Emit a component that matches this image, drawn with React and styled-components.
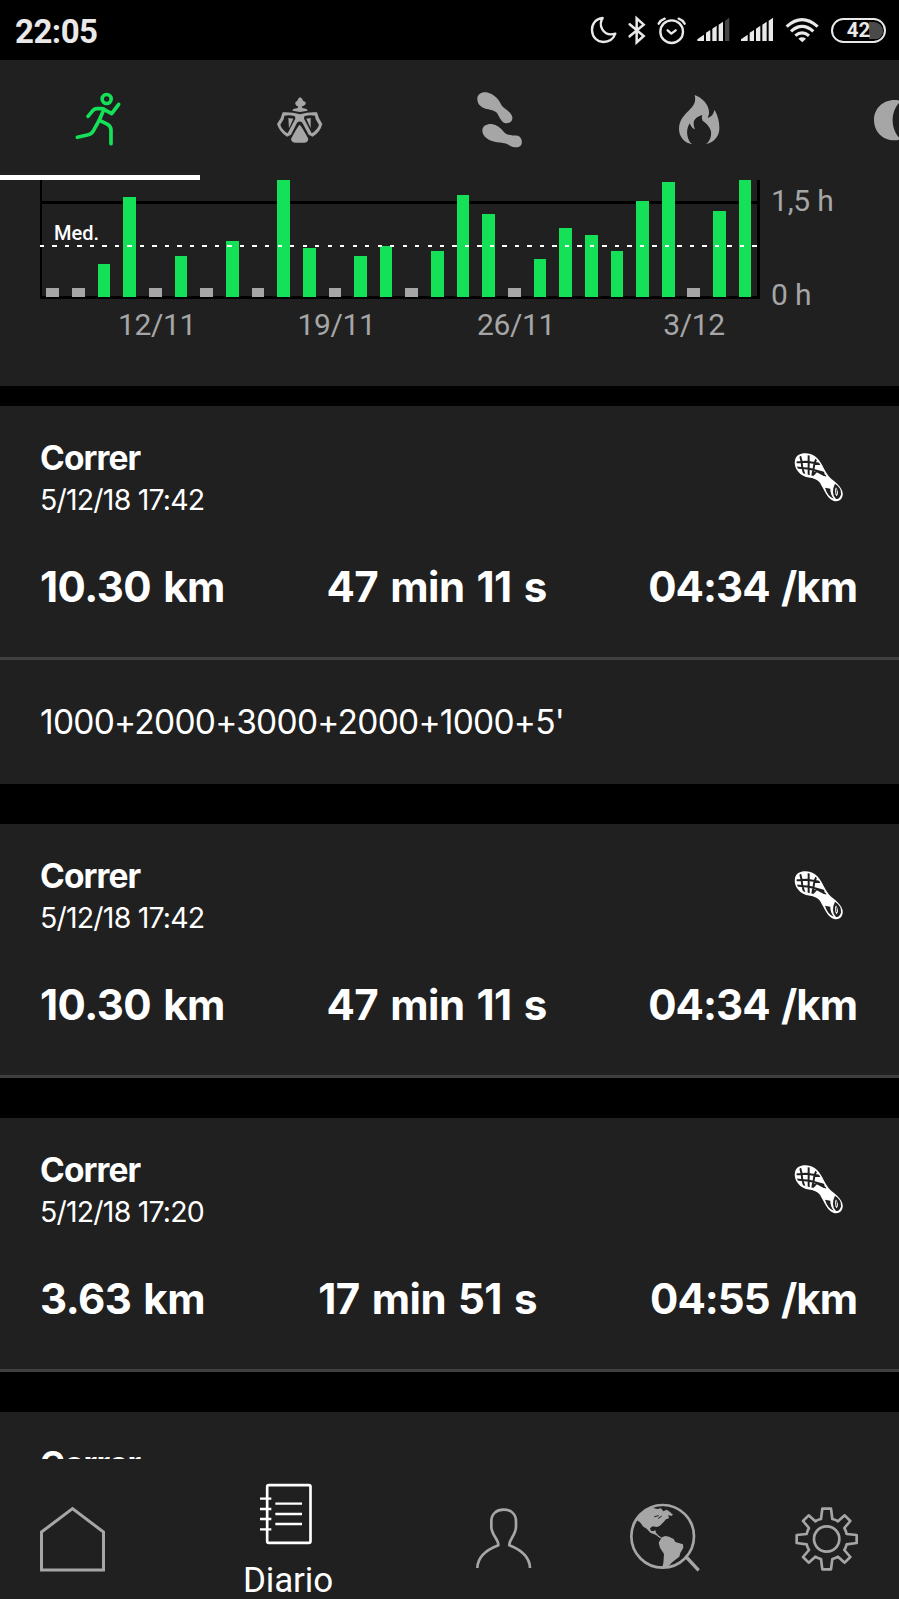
import React from 'react';
import styled, { createGlobalStyle } from 'styled-components';

const GREEN = '#14e058';
const PANEL = '#202020';
const MUTED = '#a6a6a6';

const GlobalStyle = createGlobalStyle`
  * { box-sizing: border-box; }
  html, body { margin: 0; background: #000; }
  body { width: 899px; height: 1599px; overflow: hidden; }
  svg { display: block; flex: none; }
`;

const Screen = styled.div`
  width: 899px;
  height: 1599px;
  display: flex;
  flex-direction: column;
  overflow: hidden;
  background: #000;
  color: #fff;
  font-family: Roboto, "Liberation Sans", sans-serif;
`;

/* Status bar */
const StatusBar = styled.header`
  flex: none;
  height: 60px;
  display: flex;
  align-items: center;
  justify-content: space-between;
  padding: 0 13px 0 15px;
  color: #e9e9e9;
`;
const Clock = styled.div`
  font-size: 33px;
  font-weight: 700;
  line-height: 60px;
  padding-top: 3px;
  letter-spacing: -0.5px;
`;
const StatusIcons = styled.div`
  display: flex;
  align-items: center;
`;
const Battery = styled.div`
  width: 55px;
  height: 25px;
  margin-left: 6px;
  border: 2.6px solid #e9e9e9;
  border-radius: 13px;
  display: flex;
  align-items: center;
  justify-content: center;
  font-size: 20.5px;
  font-weight: 700;
  line-height: 20px;
  background: linear-gradient(to right, #000 34px, #4a4a4a 34px) content-box;
  padding: 1.5px;
`;

/* Sport tabs */
const Tabs = styled.nav`
  flex: none;
  height: 120px;
  display: flex;
  overflow: hidden;
  background: ${PANEL};
`;
const Tab = styled.div`
  flex: 0 0 200px;
  display: flex;
  align-items: center;
  justify-content: center;
  color: ${(p) => (p.$active ? GREEN : MUTED)};
  box-shadow: ${(p) => (p.$active ? 'inset 0 -5px 0 #fff' : 'none')};
`;

/* Chart */
const ChartPanel = styled.section`
  flex: none;
  height: 206px;
  margin-bottom: 20px;
  padding-left: 40px;
  background: ${PANEL};
  color: ${MUTED};
  font-size: 30px;
  line-height: 36px;
`;
const ChartRow = styled.div`
  display: flex;
`;
const Plot = styled.div`
  position: relative;
  width: 720px;
  height: 119px;
  border: solid #000;
  border-width: 0 3px 3px 2px;
`;
const GridLine = styled.div`
  position: absolute;
  left: 0;
  right: 0;
  top: 21px;
  height: 3px;
  background: #000;
`;
const Bars = styled.div`
  position: relative;
  display: flex;
  align-items: flex-end;
  justify-content: space-around;
  width: 718px;
  height: 117px;
  margin-left: -2px;
`;
const Bar = styled.div`
  width: 12.7px;
  background: ${(p) => (p.$rest ? MUTED : GREEN)};
`;
const AverageLine = styled.div`
  position: absolute;
  left: -2px;
  right: 0;
  top: 65px;
  height: 2px;
  background: repeating-linear-gradient(to right, #fff 0 4.2px, transparent 4.2px 12.5px);
`;
const AverageLabel = styled.div`
  position: absolute;
  left: 12px;
  top: 41px;
  color: #fff;
  font-size: 20px;
  font-weight: 500;
  line-height: 24px;
`;
const HourScale = styled.div`
  display: flex;
  flex-direction: column;
  justify-content: space-between;
  height: 134px;
  padding: 3px 0 1px 11px;
  letter-spacing: -0.2px;
`;
const Dates = styled.div`
  display: grid;
  grid-template-columns: 52px 179.5px 179.5px 178px 179.5px;
  width: 720px;
  overflow: visible;
  margin-top: -7px;
`;
const DateLabel = styled.span`
  width: 130px;
  text-align: center;
  letter-spacing: -0.4px;
  &:first-child { grid-column: 2; }
`;

/* Activity feed */
const Feed = styled.main`
  flex: 1;
  min-height: 0;
  overflow: hidden;
  display: flex;
  flex-direction: column;
  gap: 40px;
  font-family: Inter, "Liberation Sans", sans-serif;
`;
const Card = styled.article`
  flex: none;
  background: ${PANEL};
`;
const Summary = styled.div`
  height: 254px;
  padding: 32px 40px 0;
  border-bottom: 3px solid #3f3f3f;
`;
const CardHead = styled.div`
  display: flex;
  justify-content: space-between;
  height: 119px;
  padding-right: 10px;
  & > svg { margin-top: 9px; }
`;
const Title = styled.h2`
  margin: 0;
  font-size: 33.5px;
  line-height: 40px;
  font-weight: 700;
  letter-spacing: -0.9px;
`;
const When = styled.div`
  font-size: 28.5px;
  line-height: 36px;
  margin-top: 4px;
  letter-spacing: -0.8px;
`;
const Metrics = styled.div`
  display: flex;
  justify-content: space-between;
  font-size: 42px;
  line-height: 60px;
  font-weight: 700;
  letter-spacing: -0.5px;
  word-spacing: 2.5px;
  white-space: nowrap;
  padding-right: 2px;
  & > span:last-child { letter-spacing: -1px; }
`;
const Note = styled.p`
  margin: 0;
  height: 124px;
  padding: 0 40px;
  font-size: 33.5px;
  line-height: 124px;
  letter-spacing: -0.75px;
  white-space: nowrap;
`;

/* Bottom navigation */
const BottomNav = styled.nav`
  flex: none;
  height: 140px;
  display: grid;
  grid-template-columns: 144px 288px 144px 180px 142px;
  background: ${PANEL};
`;
const NavItem = styled.div`
  display: flex;
  flex-direction: column;
  align-items: center;
  padding-top: ${(p) => (p.$active ? 15 : 41)}px;
  color: ${(p) => (p.$active ? '#fff' : MUTED)};
  font-size: 35px;
  line-height: 40px;
  & > span { margin-top: 7px; letter-spacing: -0.1px; }
`;

function Glyph({ box, width, height, children }) {
  return (
    <svg viewBox={box} width={width} height={height} fill="none" stroke="currentColor" strokeLinecap="round" strokeLinejoin="round">
      {children}
    </svg>
  );
}

const MoonGlyph = () => (
  <Glyph box="50 0 105 180" width={35} height={60}>
    <path strokeWidth="7" d="M97 54C75 56 64 74 65 91C66 112 81 126 99 126C116 126 129 117 135 101C119 106 104 101 96 88C89 76 91 63 97 54Z" />
  </Glyph>
);
const BluetoothGlyph = () => (
  <Glyph box="155 0 90 180" width={30} height={60}>
    <path strokeWidth="7.500" strokeLinejoin="miter" d="M178 73L220 108L199 127V55L220 74L178 109" />
  </Glyph>
);
const AlarmGlyph = () => (
  <Glyph box="245 0 120 180" width={40} height={60}>
    <circle cx="304" cy="95" r="34" strokeWidth="7" />
    <path strokeWidth="7" d="M265 71Q271 60 283 56M343 71Q337 60 325 56M292 91L303 101L316 91" />
  </Glyph>
);
const SignalGlyph = ({ box, width, x, weak }) => (
  <Glyph box={box} width={width} height={60}>
    <g fill="currentColor" stroke="none">
      <path d={`M${x} 123V118L${x + 20} 104V123Z`} />
      <path d={`M${x + 26} 123V98L${x + 39} 90V123Z`} />
      <path d={`M${x + 45} 123V86L${x + 58} 77V123Z`} />
      <path d={`M${x + 64} 123V74L${x + 77} 65V123Z`} />
      <path opacity={weak ? 0.3 : 1} d={`M${x + 83} 123V62L${x + 96} 53V123Z`} />
    </g>
  </Glyph>
);
const WifiGlyph = () => (
  <Glyph box="630 0 135 180" width={45} height={60}>
    <g strokeWidth="9.500" strokeLinecap="butt">
      <path d="M650 80Q696 38 743 80M663 94Q696 64 730 94M676 107Q696 90 717 107" />
    </g>
    <path fill="currentColor" stroke="none" d="M685 116Q696 108 708 116L697 127Z" />
  </Glyph>
);

const RunnerGlyph = () => (
  <Glyph box="210 270 180 180" width={60} height={60}>
    <g strokeWidth="11">
      <circle cx="320" cy="297" r="13.500" />
      <path d="M264 349L279 331Q284 326 291 326H305Q311 326 317 331L335 341L356 313" />
      <path d="M311 330L298 360L282 389Q276 402 262 405L232 412" />
      <path d="M299 361L323 373Q333 379 333 391V431" />
    </g>
  </Glyph>
);
const MaskGlyph = () => (
  <Glyph box="810 270 180 180" width={60} height={60}>
    <g fill="currentColor" stroke="none">
      <path d="M900 291L907 297L909 302L917 307V313L909 319L905 319L907 324L920 327L923 332L900 336L877 332L880 327L893 324L895 319L891 319L886 313V307L892 302L894 297Z" />
      <path d="M848 337Q875 335 900 343Q925 335 951 337L957 355L967 372Q960 398 938 410L926 404L907 368Q899 361 891 368L873 404L861 410Q840 398 831 372L842 355Z" />
    </g>
    <g fill={PANEL} stroke="none">
      <path d="M853 347Q870 344 885 349L886 356L870 386L863 400Q845 389 841 374L851 358Z" />
      <path d="M945 347Q928 344 913 349L912 356L928 386L935 400Q953 389 957 374L947 358Z" />
    </g>
    <g fill="currentColor" stroke="none">
      <path d="M865 354L880 356L867 385Z M919 356L932 354V385Z" />
      <path d="M899 374Q906 380 925 417Q924 428 912 428H887Q874 428 873 417Q892 380 899 374Z" />
    </g>
  </Glyph>
);
const StepsGlyph = () => (
  <Glyph box="60 90 180 180" width={60} height={60}>
    <g fill="currentColor" stroke="none">
      <path d="M82 118C81 103 94 95 110 97C128 101 145 114 153 133C159 147 183 153 187 171C189 184 178 191 167 190C151 187 148 165 138 156C126 147 115 150 99 143C88 138 82 129 82 118Z" />
      <path d="M97 212C97 197 111 191 125 192C142 195 152 204 161 215C171 227 189 226 204 227C214 231 218 244 214 254C207 264 194 264 180 257C164 245 148 251 126 243C109 236 98 227 97 212Z" />
    </g>
  </Glyph>
);
const FlameGlyph = () => (
  <Glyph box="660 90 180 180" width={60} height={60}>
    <path fill="currentColor" stroke="none" d="M734 105C757 113 777 135 777 156C778 162 775 168 773 173C784 171 791 162 793 149C803 163 809 188 808 207C807 229 793 246 768 253C778 245 785 230 783 215C780 199 768 190 758 182C755 177 755 171 757 165C744 168 730 178 731 191C731 198 733 202 735 207C729 208 725 203 719 190C712 202 710 213 712 226C714 239 720 249 727 253C703 249 687 230 687 207C687 182 701 166 716 152C732 137 739 125 734 105Z" />
  </Glyph>
);
const SleepGlyph = () => (
  <Glyph box="1260 90 180 180" width={60} height={60}>
    <path fill="currentColor" stroke="none" d="M1334 120C1297 120 1272 147 1272 180C1272 214 1297 241 1334 241C1340 241 1349 240 1352 237C1320 211 1320 151 1352 124C1348 121 1340 120 1334 120Z" />
  </Glyph>
);

const ShoeGlyph = () => (
  <svg viewBox="27 21 180 180" width="60" height="60" fill="none">
    <defs>
      <clipPath id="sole">
        <path d="M51 58C58 44 84 41 101 52C119 64 125 85 135 101L140 110C122 107 114 111 98 107C80 105 60 99 53 85C49 77 48 68 51 58Z" />
      </clipPath>
    </defs>
    <path fill="#fff" d="M47 54C55 37 87 35 105 49C125 64 131 89 145 107C156 121 180 132 187 154C193 175 177 188 162 183C143 178 134 153 124 136C117 119 101 115 83 112C56 106 37 79 47 54Z" />
    <g clipPath="url(#sole)" stroke={PANEL} strokeWidth="6">
      <path d="M60 46Q66 64 67 84L76 112M86 36V112M112 54Q104 62 101 84L96 112M44 67L80 65L124 72M44 82L88 86L134 99M96 108L110 93L145 112" />
    </g>
    <path fill={PANEL} d="M135 143L151 146Q150 160 161 176Q143 169 135 143Z" />
    <path fill={PANEL} d="M165 131Q185 144 183 163Q179 179 168 177Q151 159 165 131Z" />
    <path fill="#fff" d="M168 142Q161 153 169 169Q179 160 168 142Z" />
    <path stroke={PANEL} strokeWidth="2.500" d="M169 148V162" />
  </svg>
);

const HomeGlyph = () => (
  <Glyph box="96 180 240 240" width={80} height={80}>
    <path strokeWidth="9" strokeLinejoin="miter" d="M124.500 276L217.500 206L310.500 276V390H124.500Z" />
  </Glyph>
);
const DiaryGlyph = () => (
  <Glyph box="744 102 240 240" width={80} height={80}>
    <rect x="801.500" y="135.500" width="130" height="173" rx="5" strokeWidth="8" />
    <path strokeWidth="7" strokeLinecap="butt" d="M780 176H814M780 207H814M780 237H814M780 268H814M826 191H906M826 222H906M826 252H906" />
  </Glyph>
);
const ProfileGlyph = () => (
  <Glyph box="42 180 240 240" width={80} height={80}>
    <path strokeWidth="8" strokeLinecap="butt" d="M82 384C83 350 111 329 145 316C147 299 124 285 124 260V244C124 221 140 209 161 209C182 209 198 221 198 244V260C198 285 176 299 178 316C211 329 239 350 240 384" />
  </Glyph>
);
const GlobeGlyph = () => (
  <Glyph box="528 180 240 240" width={80} height={80}>
    <circle cx="638" cy="289" r="94" strokeWidth="8" />
    <path strokeWidth="10" strokeLinecap="butt" d="M706 348L746 391" />
    <path fill="currentColor" stroke="none" d="M558 239C573 216 590 202 607 203L622 207L633 205L640 214L650 209L660 216L669 224L664 228L655 225L657 235L648 238L641 246L629 258L620 261L608 259L600 265L603 273L612 273L616 270L618 278L626 287L634 292L630 295L618 285L601 278L590 266L580 260L570 247Z" />
    <path fill="currentColor" stroke="none" d="M635 292L646 288L657 290L671 297L676 306L699 313L700 323L691 339L688 350L678 358L665 368L656 379L636 384L640 370L642 342L630 323L626 308Z" />
    <path stroke={PANEL} strokeWidth="3" d="M614 230L625 227M625 235L634 229M633 202L642 201" />
  </Glyph>
);
const GearGlyph = () => (
  <Glyph box="1011 180 240 240" width={80} height={80}>
    <circle cx="1130" cy="297" r="38" strokeWidth="8" />
    <path strokeWidth="8" d="M1117 206H1143L1147 237Q1157 239 1164 244L1184 226L1201 243L1183 264Q1188 272 1190 282L1220 285V309L1190 313Q1188 322 1183 330L1201 351L1184 368L1164 350Q1157 355 1147 357L1143 388H1117L1113 357Q1103 355 1096 350L1076 368L1059 351L1077 330Q1072 322 1070 313L1040 309V285L1070 282Q1072 272 1077 264L1059 243L1076 226L1096 244Q1103 239 1113 237Z" />
  </Glyph>
);

// Bar heights in pixels; null is a rest day.
const DAYS = [
  null, null, 33, 100, null, 41, null, 56.5, null, 117, 49.5, null, 41, 51,
  null, 45.7, 102, 83, null, 38, 69, 62, 45.7, 96.5, 115.5, null, 86, 117,
];

const ACTIVITIES = [
  { title: 'Correr', when: '5/12/18 17:42', metrics: ['10.30 km', '47 min 11 s', '04:34 /km'], note: "1000+2000+3000+2000+1000+5'" },
  { title: 'Correr', when: '5/12/18 17:42', metrics: ['10.30 km', '47 min 11 s', '04:34 /km'] },
  { title: 'Correr', when: '5/12/18 17:20', metrics: ['3.63 km', '17 min 51 s', '04:55 /km'] },
  { title: 'Correr', when: '', metrics: [] },
];

function Activity({ title, when, metrics, note }) {
  return (
    <Card>
      <Summary>
        <CardHead>
          <div>
            <Title>{title}</Title>
            <When>{when}</When>
          </div>
          {when && <ShoeGlyph />}
        </CardHead>
        <Metrics>
          {metrics.map((m) => <span key={m}>{m}</span>)}
        </Metrics>
      </Summary>
      {note && <Note>{note}</Note>}
    </Card>
  );
}

export default function App() {
  return (
    <Screen>
      <GlobalStyle />
      <StatusBar>
        <Clock>22:05</Clock>
        <StatusIcons>
          <MoonGlyph />
          <BluetoothGlyph />
          <AlarmGlyph />
          <SignalGlyph box="365 0 130 180" width={43.33} x={381} weak />
          <SignalGlyph box="495 0 135 180" width={45} x={513} />
          <WifiGlyph />
          <Battery>42</Battery>
        </StatusIcons>
      </StatusBar>
      <Tabs>
        <Tab $active><RunnerGlyph /></Tab>
        <Tab><MaskGlyph /></Tab>
        <Tab><StepsGlyph /></Tab>
        <Tab><FlameGlyph /></Tab>
        <Tab><SleepGlyph /></Tab>
      </Tabs>
      <ChartPanel>
        <ChartRow>
          <Plot>
            <GridLine />
            <Bars>
              {DAYS.map((h, i) => (
                <Bar key={i} $rest={h === null} style={{ height: h === null ? 9 : h }} />
              ))}
            </Bars>
            <AverageLine />
            <AverageLabel>Med.</AverageLabel>
          </Plot>
          <HourScale>
            <span>1,5 h</span>
            <span>0 h</span>
          </HourScale>
        </ChartRow>
        <Dates>
          <DateLabel>12/11</DateLabel>
          <DateLabel>19/11</DateLabel>
          <DateLabel>26/11</DateLabel>
          <DateLabel>3/12</DateLabel>
        </Dates>
      </ChartPanel>
      <Feed>
        {ACTIVITIES.map((a, i) => <Activity key={i} {...a} />)}
      </Feed>
      <BottomNav>
        <NavItem><HomeGlyph /></NavItem>
        <NavItem $active>
          <DiaryGlyph />
          <span>Diario</span>
        </NavItem>
        <NavItem><ProfileGlyph /></NavItem>
        <NavItem><GlobeGlyph /></NavItem>
        <NavItem><GearGlyph /></NavItem>
      </BottomNav>
    </Screen>
  );
}
